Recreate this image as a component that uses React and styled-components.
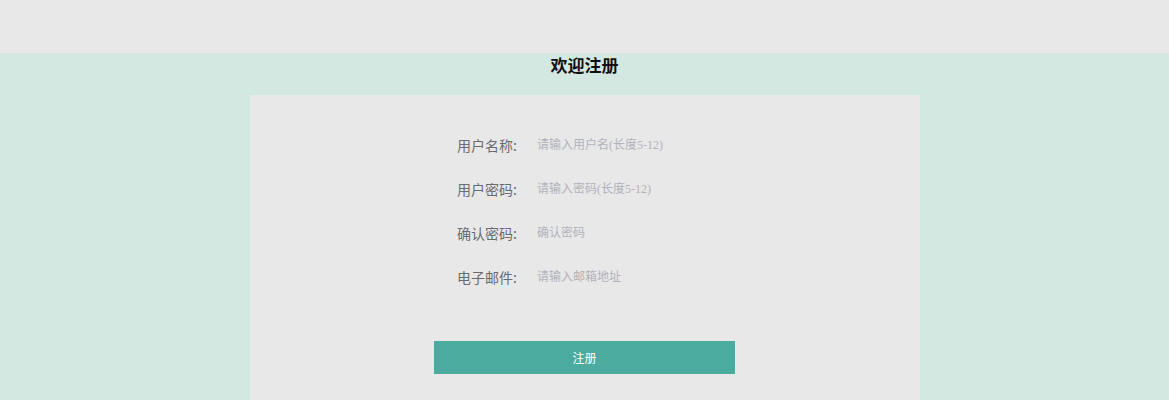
import React from "react";
import styled, { createGlobalStyle } from "styled-components";

const Global = createGlobalStyle`
  html, body { margin: 0; padding: 0; }
  body {
    background: #d4e8e2;
    font-family: "Noto Sans CJK SC", "Noto Sans", sans-serif;
  }
  input::placeholder { color: #b2b2bb; }
`;

const TopBar = styled.div`
  height: 53px;
  background: #e8e8e8;
`;

const Title = styled.h2`
  margin: 0;
  height: 23px;
  line-height: 23px;
  text-align: center;
  font-size: 17px;
  font-weight: 700;
  color: #111;
`;

const Card = styled.form`
  width: 670px;
  margin: 19px auto 0;
  background: #e8e8e8;
  padding: 28px 0 60px;
  box-sizing: border-box;
  display: flex;
  flex-direction: column;
  align-items: center;
`;

const Rows = styled.div`
  display: flex;
  flex-direction: column;
`;

const Row = styled.label`
  height: 44px;
  display: flex;
  align-items: center;
`;

const Label = styled.span`
  width: 80px;
  font-size: 14px;
  color: #6a6a72;
  white-space: nowrap;
`;

const Input = styled.input`
  width: 175px;
  height: 28px;
  border: none;
  outline: none;
  background: transparent;
  padding: 0;
  font-family: "Liberation Serif", "Noto Sans CJK SC", serif;
  font-size: 12px;
  color: #555;
`;

const Button = styled.button`
  margin-top: 42px;
  width: 301px;
  height: 33px;
  border: none;
  background: #4aab9e;
  color: #fff;
  font-family: "Noto Sans CJK SC", sans-serif;
  font-size: 12px;
  cursor: pointer;
`;

const fields = [
  { label: "用户名称:", ph: "请输入用户名(长度5-12)", type: "text" },
  { label: "用户密码:", ph: "请输入密码(长度5-12)", type: "password" },
  { label: "确认密码:", ph: "确认密码", type: "password" },
  { label: "电子邮件:", ph: "请输入邮箱地址", type: "email" },
];

export default function App() {
  return (
    <>
      <Global />
      <TopBar />
      <Title>欢迎注册</Title>
      <Card onSubmit={(e) => e.preventDefault()}>
        <Rows>
          {fields.map((f) => (
            <Row key={f.label}>
              <Label>{f.label}</Label>
              <Input type={f.type} placeholder={f.ph} />
            </Row>
          ))}
        </Rows>
        <Button type="submit">注册</Button>
      </Card>
    </>
  );
}
